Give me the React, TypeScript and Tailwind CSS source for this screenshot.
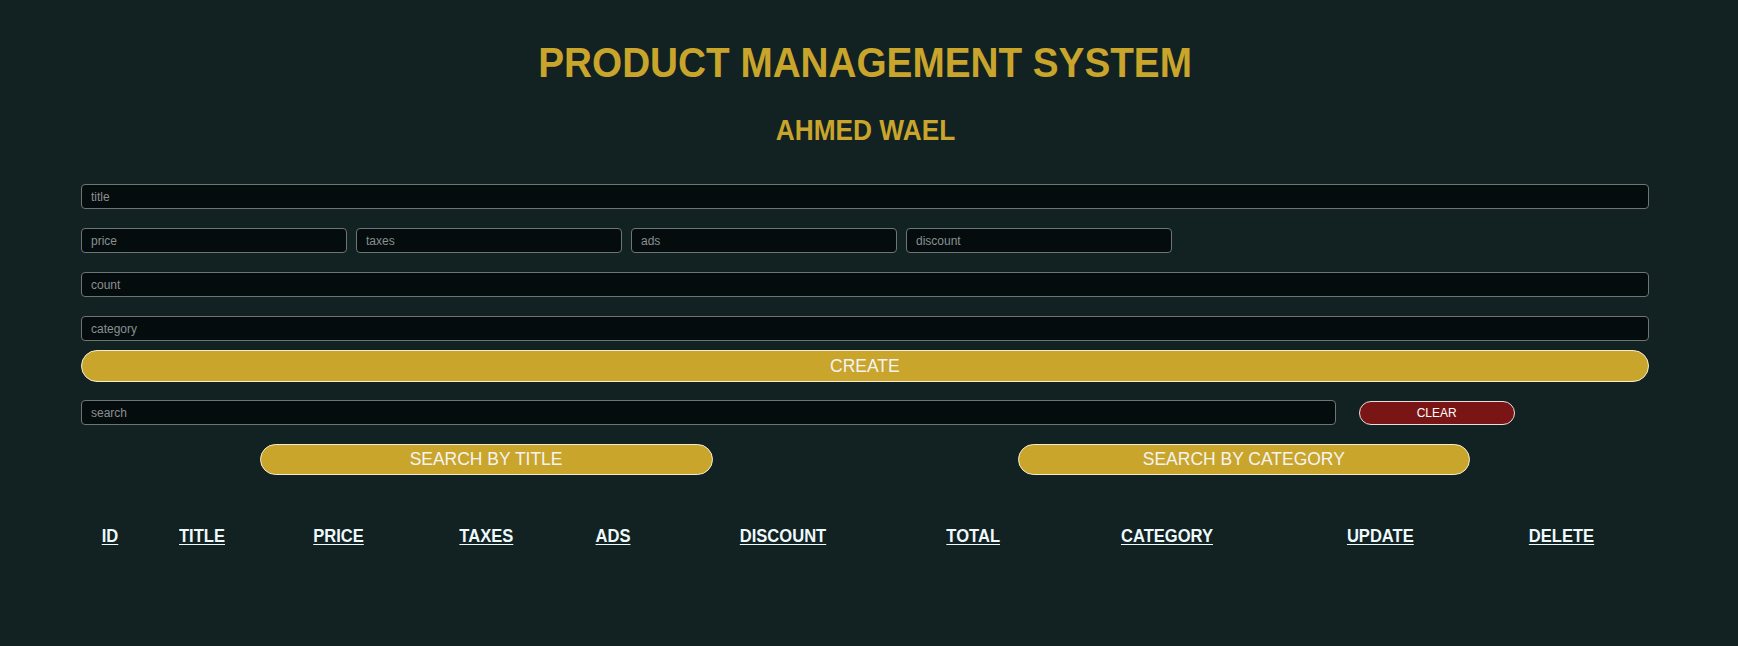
const heads = [
  "ID",
  "TITLE",
  "PRICE",
  "TAXES",
  "ADS",
  "DISCOUNT",
  "TOTAL",
  "CATEGORY",
  "UPDATE",
  "DELETE",
];

// narrow fonts are not installed, so Liberation Sans is squeezed a little
const font = "font-['Liberation_Sans_Narrow','Arial_Narrow','Liberation_Sans',sans-serif]";

function Field({ placeholder, className = "" }: { placeholder: string; className?: string }) {
  return (
    <input
      placeholder={placeholder}
      className={`h-[25px] rounded-[4px] border border-[#6f7475] bg-[#040c0e] px-[9px] text-[12px] text-gray-200 placeholder:text-[#8b8f90] outline-none ${className}`}
    />
  );
}

function GoldButton({ label, className = "" }: { label: string; className?: string }) {
  return (
    <button
      className={`rounded-full border border-[#f3ecd2] bg-[#c9a52c] text-[19px] text-[#f4f4f4] ${className}`}
    >
      <span className="inline-block scale-x-[0.92]">{label}</span>
    </button>
  );
}

export default function App() {
  return (
    <div className={`min-h-[646px] bg-[#122223] pl-[81px] pr-[89px] pt-[41px] ${font}`}>
      <h1 className="text-center text-[43px] font-bold leading-none text-[#c9a52c]">
        <span className="inline-block scale-x-[0.9]">PRODUCT MANAGEMENT SYSTEM</span>
      </h1>
      <h2 className="mt-[31px] text-center text-[30px] font-bold leading-none text-[#c9a52c]">
        <span className="inline-block scale-x-[0.875]">AHMED WAEL</span>
      </h2>

      <div className="mt-[39px] flex flex-col">
        <Field placeholder="title" className="w-full" />
        <div className="mt-[19px] flex gap-[9px]">
          <Field placeholder="price" className="w-[266px]" />
          <Field placeholder="taxes" className="w-[266px]" />
          <Field placeholder="ads" className="w-[266px]" />
          <Field placeholder="discount" className="w-[266px]" />
        </div>
        <Field placeholder="count" className="mt-[19px] w-full" />
        <Field placeholder="category" className="mt-[19px] w-full" />
        <GoldButton label="CREATE" className="mt-[9px] h-[32px] w-full" />
      </div>

      <div className="mt-[18px] flex items-center">
        <Field placeholder="search" className="w-[1255px]" />
        <button className="ml-[23px] h-[24px] w-[156px] rounded-[12px] border border-[#e8dede] bg-[#7a1515] text-[13px] text-white">
          <span className="inline-block scale-x-[0.92]">CLEAR</span>
        </button>
      </div>

      <div className="mt-[19px] flex">
        <GoldButton label="SEARCH BY TITLE" className="ml-[179px] h-[31px] w-[453px]" />
        <GoldButton label="SEARCH BY CATEGORY" className="ml-[305px] h-[31px] w-[452px]" />
      </div>

      <div className="mt-[52px] grid grid-cols-[58px_126px_148px_147px_106px_233px_149px_238px_189px_173px]">
        {heads.map((h) => (
          <div key={h} className="text-center text-[18px] font-bold leading-none text-[#eef9fb]">
            <span className="inline-block scale-x-[0.92] underline underline-offset-2">{h}</span>
          </div>
        ))}
      </div>
    </div>
  );
}
